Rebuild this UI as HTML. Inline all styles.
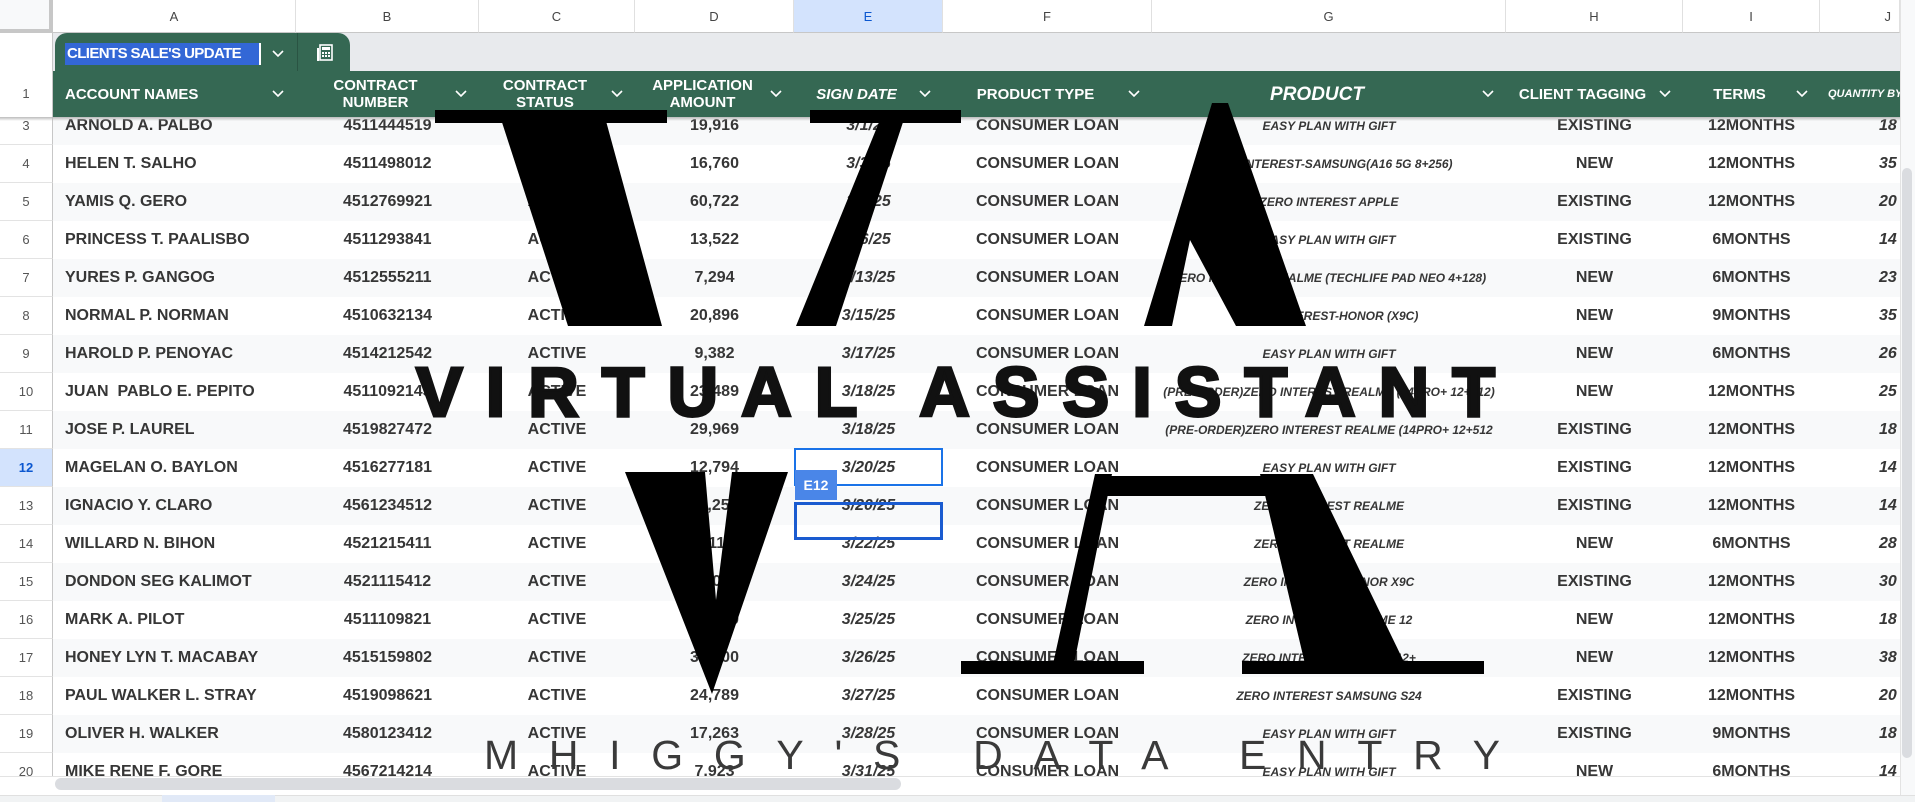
<!DOCTYPE html>
<html><head><meta charset="utf-8"><style>
*{margin:0;padding:0;box-sizing:border-box}
body{width:1915px;height:802px;overflow:hidden;background:#fff;font-family:"Liberation Sans",Arial,sans-serif;position:relative}
.abs{position:absolute}
.colhdr{position:absolute;top:0;height:33px;border-right:1px solid #e0e0e0;border-bottom:1px solid #c7c7c7;font-size:13px;color:#444;display:flex;align-items:center;justify-content:center;background:#fff}
.hc{position:absolute;top:71px;height:46px;background:#356853;color:#fff;font-weight:bold;font-size:15px;display:flex;align-items:center;line-height:17px}
.hc .t{flex:1;text-align:center}
.hc svg{margin-right:12px;flex:none}
.row{position:absolute;left:53px;width:1847px;height:38px}
.c{position:absolute;top:0;height:38px;line-height:38px;font-weight:bold;font-size:16px;color:#363636;text-align:center;white-space:nowrap;overflow:hidden}
.p{font-style:italic;font-size:12px}
.rn{position:absolute;left:0;width:53px;height:38px;line-height:38px;text-align:center;font-size:13px;color:#555;border-bottom:1px solid #e3e3e3;border-right:1px solid #c7c7c7;background:#fff}
</style></head><body>

<div class="colhdr" style="left:0;width:53px;background:#f8f9fa;border-right:4px solid #c7c7c7;border-bottom:4px solid #c7c7c7"></div>
<div class="colhdr" style="left:53px;width:243px">A</div>
<div class="colhdr" style="left:296px;width:183px">B</div>
<div class="colhdr" style="left:479px;width:156px">C</div>
<div class="colhdr" style="left:635px;width:159px">D</div>
<div class="colhdr" style="left:794px;width:149px;background:#d3e3fd;color:#0b57d0">E</div>
<div class="colhdr" style="left:943px;width:209px">F</div>
<div class="colhdr" style="left:1152px;width:354px">G</div>
<div class="colhdr" style="left:1506px;width:177px">H</div>
<div class="colhdr" style="left:1683px;width:137px">I</div>
<div class="colhdr" style="left:1820px;width:80px;justify-content:flex-end;padding-right:8px">J</div>

<div class="abs" style="left:0;top:33px;width:53px;height:38px;background:#fff;border-right:1px solid #c7c7c7"></div>
<div class="abs" style="left:53px;top:33px;width:1847px;height:38px;background:#e8eaed"></div>
<div class="abs" style="left:55px;top:33px;width:295px;height:38px;background:#356853;border-radius:12px 12px 0 0"></div>
<div class="abs" style="left:65px;top:43px;width:195px;height:22px;background:#3367d6;color:#fff;font-weight:bold;font-size:15px;line-height:22px;letter-spacing:-0.6px;padding-left:2px;white-space:nowrap">CLIENTS SALE'S UPDATE</div>
<div class="abs" style="left:259px;top:43px;width:2px;height:22px;background:#fff"></div>
<svg class="abs" style="left:272px;top:49px" width="12" height="10"><polyline points="1,2 6,7 11,2" fill="none" stroke="#fff" stroke-width="1.6"/></svg>
<div class="abs" style="left:297px;top:33px;width:1px;height:38px;background:#2a5443"></div>
<svg class="abs" style="left:316px;top:44px" width="18" height="18"><rect x="4" y="1" width="12" height="15" fill="none" stroke="#fff" stroke-width="1.6"/><rect x="1" y="4" width="2" height="13" fill="#fff"/><rect x="6" y="3" width="8" height="3" fill="#fff"/><g fill="#fff"><rect x="6" y="8" width="2" height="2"/><rect x="9" y="8" width="2" height="2"/><rect x="12" y="8" width="2" height="2"/><rect x="6" y="11" width="2" height="2"/><rect x="9" y="11" width="2" height="2"/><rect x="12" y="11" width="2" height="2"/></g></svg>

<div class="abs" style="left:0;top:71px;width:53px;height:46px;background:#fff;border-right:1px solid #c7c7c7;text-align:center;line-height:46px;font-size:13px;color:#555">1</div>
<div class="hc" style="left:53px;width:243px"><span class="t" style="text-align:left;padding-left:12px">ACCOUNT NAMES</span><svg width="12" height="10"><polyline points="1,2 6,7 11,2" fill="none" stroke="#fff" stroke-width="1.6"/></svg></div>
<div class="hc" style="left:296px;width:183px"><span class="t">CONTRACT<br>NUMBER</span><svg width="12" height="10"><polyline points="1,2 6,7 11,2" fill="none" stroke="#fff" stroke-width="1.6"/></svg></div>
<div class="hc" style="left:479px;width:156px"><span class="t">CONTRACT<br>STATUS</span><svg width="12" height="10"><polyline points="1,2 6,7 11,2" fill="none" stroke="#fff" stroke-width="1.6"/></svg></div>
<div class="hc" style="left:635px;width:159px"><span class="t">APPLICATION<br>AMOUNT</span><svg width="12" height="10"><polyline points="1,2 6,7 11,2" fill="none" stroke="#fff" stroke-width="1.6"/></svg></div>
<div class="hc" style="left:794px;width:149px"><span class="t" style="font-style:italic">SIGN DATE</span><svg width="12" height="10"><polyline points="1,2 6,7 11,2" fill="none" stroke="#fff" stroke-width="1.6"/></svg></div>
<div class="hc" style="left:943px;width:209px"><span class="t">PRODUCT TYPE</span><svg width="12" height="10"><polyline points="1,2 6,7 11,2" fill="none" stroke="#fff" stroke-width="1.6"/></svg></div>
<div class="hc" style="left:1152px;width:354px"><span class="t" style="font-style:italic;font-size:19px">PRODUCT</span><svg width="12" height="10"><polyline points="1,2 6,7 11,2" fill="none" stroke="#fff" stroke-width="1.6"/></svg></div>
<div class="hc" style="left:1506px;width:177px"><span class="t">CLIENT TAGGING</span><svg width="12" height="10"><polyline points="1,2 6,7 11,2" fill="none" stroke="#fff" stroke-width="1.6"/></svg></div>
<div class="hc" style="left:1683px;width:137px"><span class="t">TERMS</span><svg width="12" height="10"><polyline points="1,2 6,7 11,2" fill="none" stroke="#fff" stroke-width="1.6"/></svg></div>
<div class="hc" style="left:1820px;width:80px;overflow:hidden"><span style="font-style:italic;font-size:11px;padding-left:8px;white-space:nowrap">QUANTITY BY</span></div>

<div class="abs" style="left:0;top:117px;width:1900px;height:659px;overflow:hidden">
<div id="rows" style="position:relative;top:-10px"></div>
</div>
<div class="abs" style="left:0;top:117px;width:1900px;height:4px;background:linear-gradient(#bbb,rgba(255,255,255,0))"></div>

<script>
var d=[
["3","ARNOLD A. PALBO","4511444519","ACTIVE","19,916","3/1/25","EASY PLAN WITH GIFT","EXISTING","12MONTHS","18"],
["4","HELEN T. SALHO","4511498012","ACTIVE","16,760","3/3/25","ZERO INTEREST-SAMSUNG(A16 5G 8+256)","NEW","12MONTHS","35"],
["5","YAMIS Q. GERO","4512769921","ACTIVE","60,722","3/4/25","ZERO INTEREST APPLE","EXISTING","12MONTHS","20"],
["6","PRINCESS T. PAALISBO","4511293841","ACTIVE","13,522","3/6/25","EASY PLAN WITH GIFT","EXISTING","6MONTHS","14"],
["7","YURES P. GANGOG","4512555211","ACTIVE","7,294","3/13/25","ZERO INTEREST REALME (TECHLIFE PAD NEO 4+128)","NEW","6MONTHS","23"],
["8","NORMAL P. NORMAN","4510632134","ACTIVE","20,896","3/15/25","ZERO INTEREST-HONOR (X9C)","NEW","9MONTHS","35"],
["9","HAROLD P. PENOYAC","4514212542","ACTIVE","9,382","3/17/25","EASY PLAN WITH GIFT","NEW","6MONTHS","26"],
["10","JUAN  PABLO E. PEPITO","4511092145","ACTIVE","23,489","3/18/25","(PRE-ORDER)ZERO INTEREST REALME (14PRO+ 12+512)","NEW","12MONTHS","25"],
["11","JOSE P. LAUREL","4519827472","ACTIVE","29,969","3/18/25","(PRE-ORDER)ZERO INTEREST REALME (14PRO+ 12+512","EXISTING","12MONTHS","18"],
["12","MAGELAN O. BAYLON","4516277181","ACTIVE","12,794","3/20/25","EASY PLAN WITH GIFT","EXISTING","12MONTHS","14"],
["13","IGNACIO Y. CLARO","4561234512","ACTIVE","11,259","3/20/25","ZERO INTEREST REALME","EXISTING","12MONTHS","14"],
["14","WILLARD N. BIHON","4521215411","ACTIVE","8,112","3/22/25","ZERO INTEREST REALME","NEW","6MONTHS","28"],
["15","DONDON SEG KALIMOT","4521115412","ACTIVE","30,000","3/24/25","ZERO INTEREST HONOR X9C","EXISTING","12MONTHS","30"],
["16","MARK A. PILOT","4511109821","ACTIVE","15,000","3/25/25","ZERO INTEREST REALME 12","NEW","12MONTHS","18"],
["17","HONEY LYN T. MACABAY","4515159802","ACTIVE","30,000","3/26/25","ZERO INTEREST REALME 12+","NEW","12MONTHS","38"],
["18","PAUL WALKER L. STRAY","4519098621","ACTIVE","24,789","3/27/25","ZERO INTEREST SAMSUNG S24","EXISTING","12MONTHS","20"],
["19","OLIVER H. WALKER","4580123412","ACTIVE","17,263","3/28/25","EASY PLAN WITH GIFT","EXISTING","9MONTHS","18"],
["20","MIKE RENE F. GORE","4567214214","ACTIVE","7,923","3/31/25","EASY PLAN WITH GIFT","NEW","6MONTHS","14"]];
var cols=[[0,243],[243,183],[426,156],[582,159],[741,149],[890,209],[1099,354],[1453,177],[1630,137],[1767,80]];
var h="";
d.forEach(function(r,i){
 var top=i*38,bg=(i%2==0)?"#f8f9fa":"#fff";
 var sel=r[0]=="12";
 h+='<div class="rn" style="top:'+top+'px;'+(sel?'background:#d3e3fd;color:#0b57d0;font-weight:bold':'')+'">'+r[0]+'</div>';
 h+='<div class="row" style="top:'+top+'px;background:'+bg+'">';
 var vals=[r[1],r[2],r[3],r[4],r[5],"CONSUMER LOAN",r[6],r[7],r[8],r[9]];
 vals.forEach(function(v,j){
  var st='left:'+cols[j][0]+'px;width:'+cols[j][1]+'px;';
  var cl="c";
  if(j==0)st+='text-align:left;padding-left:12px;';
  if(j==4)st+='font-style:italic;';
  if(j==6)cl+=" p";
  if(j==9)st+='font-style:italic;text-align:left;padding-left:59px;';
  h+='<div class="'+cl+'" style="'+st+'">'+v.replace(/  /g,"&nbsp; ")+'</div>';
 });
 h+='</div>';
});
document.getElementById("rows").innerHTML=h;
</script>

<div class="abs" style="left:794px;top:448px;width:149px;height:38px;border:2px solid #1a73e8"></div>
<div class="abs" style="left:795px;top:470px;width:42px;height:30px;background:#4a86e8;color:#fff;font-weight:bold;font-size:14px;line-height:30px;text-align:center">E12</div>
<div class="abs" style="left:794px;top:502px;width:149px;height:38px;border:3px solid #1a5bd0"></div>

<svg class="abs" style="left:0;top:0" width="1915" height="802">
<g fill="#000">
<rect x="435" y="110" width="232" height="13"/>
<polygon points="498,110 603,110 662,326 568,326"/>
<rect x="810" y="110" width="151" height="13"/>
<polygon points="884,110 907,110 836,326 796,326"/>
<polygon points="1212,103 1228,103 1306,326 1236,326 1190,240 1172,326 1144,326"/>
<polygon points="625,472 705,472 716,600 732,472 788,472 712,694"/>
<rect x="1095" y="476" width="218" height="20"/>
<polygon points="1095,474 1112,474 1074,664 1053,664"/>
<rect x="961" y="661" width="183" height="13"/>
<polygon points="1260,474 1313,474 1405,664 1305,664"/>
<rect x="1242" y="661" width="242" height="13"/>
</g>
<text x="416" y="416" textLength="1079" lengthAdjust="spacing" font-family="Liberation Sans, sans-serif" font-weight="bold" font-size="70" fill="#111" stroke="#111" stroke-width="3">VIRTUAL ASSISTANT</text>
<text x="484" y="769" textLength="1016" lengthAdjust="spacing" font-family="Liberation Sans, sans-serif" font-size="41" fill="#3a3a3a">MHIGGY'S DATA ENTRY</text>
</svg>

<div class="abs" style="left:1900px;top:0;width:15px;height:802px;background:#f8f9fa;border-left:1px solid #e3e3e3"></div>
<div class="abs" style="left:1902px;top:168px;width:10px;height:590px;background:#dadce0;border-radius:5px"></div>
<div class="abs" style="left:0;top:776px;width:1900px;height:19px;background:#fff;border-top:1px solid #e3e3e3"></div>
<div class="abs" style="left:55px;top:778px;width:846px;height:12px;background:#dadce0;border-radius:6px"></div>
<div class="abs" style="left:0;top:795px;width:1915px;height:7px;background:#f1f3f4;border-top:1px solid #e0e0e0"></div>
<div class="abs" style="left:162px;top:795px;width:113px;height:7px;background:#e1e9f7"></div>
</body></html>
